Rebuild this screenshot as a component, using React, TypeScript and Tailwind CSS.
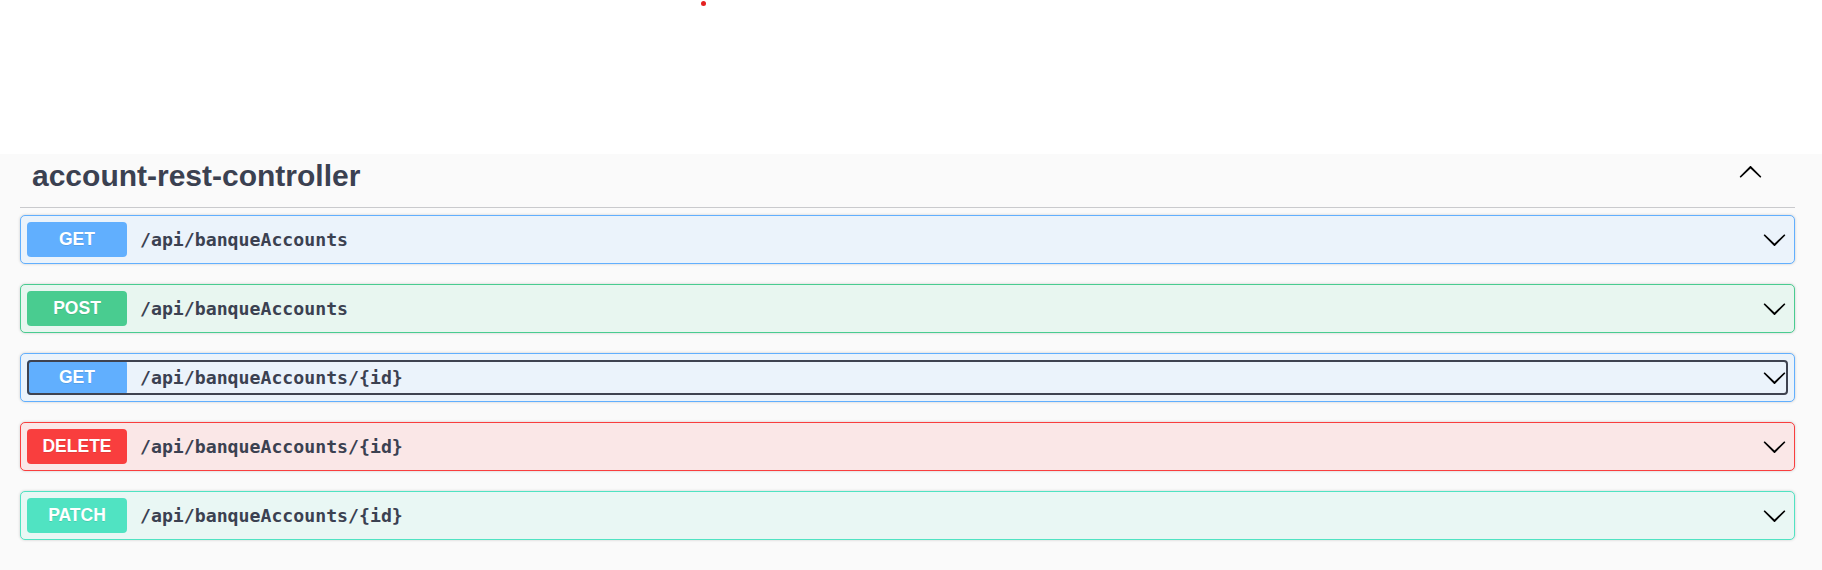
import React from "react";

type Op = {
  method: string;
  path: string;
  badge: string;
  border: string;
  bg: string;
  focused?: boolean;
};

const ops: Op[] = [
  { method: "GET", path: "/api/banqueAccounts", badge: "bg-[#61affe]", border: "border-[#61affe]", bg: "bg-[#ebf3fb]" },
  { method: "POST", path: "/api/banqueAccounts", badge: "bg-[#49cc90]", border: "border-[#49cc90]", bg: "bg-[#e8f6f0]" },
  { method: "GET", path: "/api/banqueAccounts/{id}", badge: "bg-[#61affe]", border: "border-[#61affe]", bg: "bg-[#ebf3fb]", focused: true },
  { method: "DELETE", path: "/api/banqueAccounts/{id}", badge: "bg-[#f93e3e]", border: "border-[#f93e3e]", bg: "bg-[#fae7e7]" },
  { method: "PATCH", path: "/api/banqueAccounts/{id}", badge: "bg-[#50e3c2]", border: "border-[#50e3c2]", bg: "bg-[#e9f7f4]" },
];

const Arrow = ({ up = false }: { up?: boolean }) => (
  <svg
    width="25"
    height="25"
    viewBox="0 0 20 20"
    className={up ? "rotate-180" : ""}
    aria-hidden="true"
  >
    <path
      fill="#000"
      d="M17.418 6.109c.272-.268.709-.268.979 0s.271.701 0 .969l-7.908 7.83c-.27.268-.707.268-.979 0l-7.908-7.83c-.27-.268-.27-.701 0-.969.271-.268.709-.268.979 0L10 13.25l7.418-7.141z"
    />
  </svg>
);

export default function App() {
  return (
    <div className="w-[1822px] h-[570px] overflow-hidden bg-white font-['Liberation_Sans',Arial,sans-serif]">
      <div className="h-[154px] bg-white pt-[1px]">
        <div className="ml-[701px] w-[5px] h-[5px] rounded-full bg-[#e42020]" />
      </div>
      <div className="h-[416px] bg-[#fafafa] pl-[20px] pr-[27px]">
        <div className="h-[54px] border-b border-[#c9cacd] flex items-start pl-[12px] pr-[32px]">
          <h3 className="mt-[5px] text-[30px] leading-[34px] font-bold text-[#3b4151] flex-1">
            account-rest-controller
          </h3>
          <div className="mt-[6px]">
            <Arrow up />
          </div>
        </div>
        <div className="mt-[7px] flex flex-col gap-[20px]">
          {ops.map((op, i) => (
            <div
              key={i}
              className={`rounded-[5px] border ${op.border} ${op.bg} shadow-[0_0_3px_rgba(0,0,0,0.19)] p-[6px]`}
            >
              <div
                className={`flex items-center h-[35px] rounded-[4px] ${
                  op.focused ? "outline-2 outline-offset-[-2px] outline-[#3f4350]" : ""
                }`}
              >
                <div
                  className={`${op.badge} w-[100px] h-[35px] rounded-[4px] flex items-center justify-center text-white font-bold text-[17.5px] [text-shadow:0_1px_0_rgba(0,0,0,0.1)]`}
                >
                  {op.method}
                </div>
                <div className="flex-1 pl-[13px] font-['DejaVu_Sans_Mono',monospace] font-bold text-[18.2px] text-[#3b4151]">
                  {op.path}
                </div>
                <div className="mr-[1px] flex items-center">
                  <Arrow />
                </div>
              </div>
            </div>
          ))}
        </div>
      </div>
    </div>
  );
}
